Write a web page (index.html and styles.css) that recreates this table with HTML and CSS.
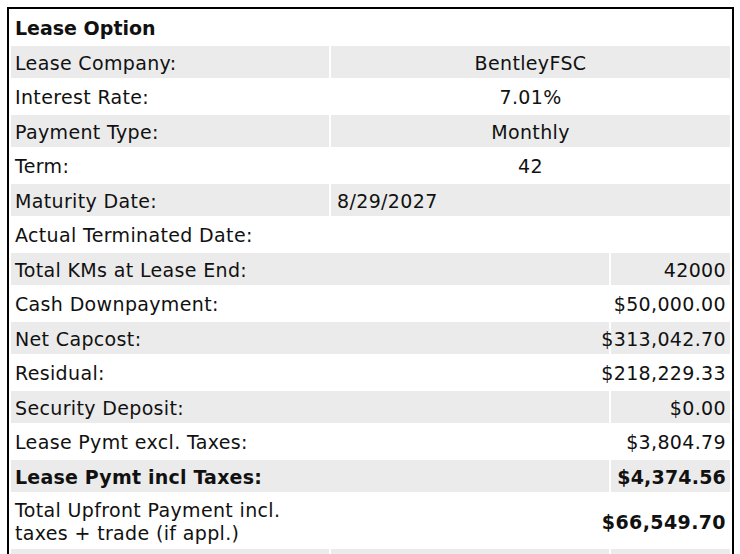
FILE: index.html
```html
<!DOCTYPE html>
<html>
<head>
<meta charset="utf-8">
<link rel="stylesheet" href="styles.css">
</head>
<body>
<table class="lease">
  <colgroup>
    <col class="c1"><col class="c2"><col class="c3">
  </colgroup>
  <tr class="head"><td colspan="3">Lease Option</td></tr>
  <tr class="alt"><td>Lease Company:</td><td colspan="2" class="center">BentleyFSC</td></tr>
  <tr><td>Interest Rate:</td><td colspan="2" class="center">7.01%</td></tr>
  <tr class="alt"><td>Payment Type:</td><td colspan="2" class="center">Monthly</td></tr>
  <tr><td>Term:</td><td colspan="2" class="center">42</td></tr>
  <tr class="alt"><td>Maturity Date:</td><td colspan="2" class="left">8/29/2027</td></tr>
  <tr><td>Actual Terminated Date:</td><td colspan="2" class="left"></td></tr>
  <tr class="alt"><td colspan="2">Total KMs at Lease End:</td><td class="right"><div class="val">42000</div></td></tr>
  <tr><td colspan="2">Cash Downpayment:</td><td class="right"><div class="val">$50,000.00</div></td></tr>
  <tr class="alt"><td colspan="2">Net Capcost:</td><td class="right"><div class="val">$313,042.70</div></td></tr>
  <tr><td colspan="2">Residual:</td><td class="right"><div class="val">$218,229.33</div></td></tr>
  <tr class="alt"><td colspan="2">Security Deposit:</td><td class="right"><div class="val">$0.00</div></td></tr>
  <tr><td colspan="2">Lease Pymt excl. Taxes:</td><td class="right"><div class="val">$3,804.79</div></td></tr>
  <tr class="alt bold"><td colspan="2">Lease Pymt incl Taxes:</td><td class="right num"><div class="val">$4,374.56</div></td></tr>
  <tr class="tall"><td colspan="2">Total Upfront Payment incl.<br>taxes + trade (if appl.)</td><td class="right bold num"><div class="val">$66,549.70</div></td></tr>
  <tr class="alt"><td></td><td></td><td></td></tr>
</table>
</body>
</html>
```

FILE: styles.css
```css
html, body {
  margin: 0;
  padding: 0;
  background: #ffffff;
}
body {
  padding: 7px 0 0 7px;
  font-family: "DejaVu Sans", Verdana, sans-serif;
  font-size: 19px;
  letter-spacing: 0.35px;
  color: #111111;
}
.lease {
  border: 2px solid #000000;
  border-spacing: 2px;
  width: 727px;
  table-layout: fixed;
}
.c1 { width: 318px; }
.c2 { width: 278px; }
.c3 { width: 119px; }
.lease td {
  height: 29.5px;
  padding: 3px 4px 0 4px;
  line-height: 23px;
  vertical-align: middle;
  white-space: nowrap;
}
.lease tr.alt td {
  background: #ebebeb;
}
.lease tr.head td {
  font-weight: bold;
  letter-spacing: 0;
}
.lease tr.tall td {
  height: 50px;
}
.lease tr.bold td,
.lease td.bold {
  font-weight: bold;
  letter-spacing: 0.2px;
}
.lease td.num {
  letter-spacing: 0.4px;
}
.lease td.left {
  padding-left: 6px;
}
.lease td.right {
  padding-right: 4px;
}
.val {
  display: flex;
  justify-content: flex-end;
}
.center { text-align: center; }
```
